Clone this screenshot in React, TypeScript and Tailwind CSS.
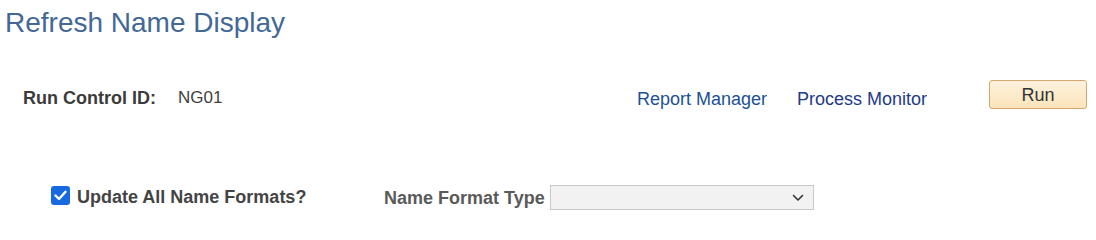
const font = { fontFamily: '"Liberation Sans", Arial, sans-serif' };

const App = () => {
  return (
    <div className="w-[1096px] h-[239px] bg-white overflow-hidden" style={font}>
      <h1 className="pl-[5px] pt-[7px] text-[28px] leading-[32px] font-normal text-[#436895]">
        Refresh Name Display
      </h1>

      {/* run control row */}
      <div className="flex items-start mt-[41px]">
        <div className="w-[637px] flex items-start pl-[23px] pt-[8px] text-[18px] leading-[20px]">
          <span className="w-[155px] font-bold text-[#3b3b3b]">Run Control ID:</span>
          <span className="text-[17px] text-[#404040]">NG01</span>
        </div>
        <a href="#" className="w-[160px] pt-[9px] text-[18px] leading-[20px] text-[#1b5196]">
          Report Manager
        </a>
        <a href="#" className="w-[192px] pt-[9px] text-[18px] leading-[20px] text-[#213a8a]">
          Process Monitor
        </a>
        <button
          type="button"
          className="w-[98px] h-[29px] flex items-center justify-center rounded-[3px] border border-[#d9a66c] bg-gradient-to-b from-[#fdf2dc] to-[#fbe4bb] text-[18px] leading-[20px] text-[#333]"
        >
          Run
        </button>
      </div>

      {/* options row */}
      <div className="flex items-start mt-[76px] pl-[51px]">
        <div className="w-[333px] flex items-start">
          <span className="mt-[1px] w-[19px] h-[19px] rounded-[3px] bg-[#1769e0] flex items-center justify-center">
            <svg width="13" height="11" viewBox="0 0 13 11" fill="none">
              <path d="M1.5 5.5 L5 9 L11.5 1.8" stroke="white" strokeWidth="2.4" strokeLinecap="round" strokeLinejoin="round" />
            </svg>
          </span>
          <span className="ml-[7px] mt-[2px] text-[18px] leading-[20px] font-bold text-[#444]">
            Update All Name Formats?
          </span>
        </div>
        <span className="mt-[3px] text-[18px] leading-[20px] font-bold text-[#5a5a5a]">Name Format Type</span>
        <div className="ml-[5px] w-[264px] h-[25px] border border-[#c9c9c9] bg-[#f2f2f2] flex items-center justify-end pr-[9px]">
          <svg width="12" height="8" viewBox="0 0 12 8" fill="none">
            <path d="M1.5 1.5 L6 6 L10.5 1.5" stroke="#333" strokeWidth="1.6" strokeLinecap="round" strokeLinejoin="round" />
          </svg>
        </div>
      </div>
    </div>
  );
};

export default App;
